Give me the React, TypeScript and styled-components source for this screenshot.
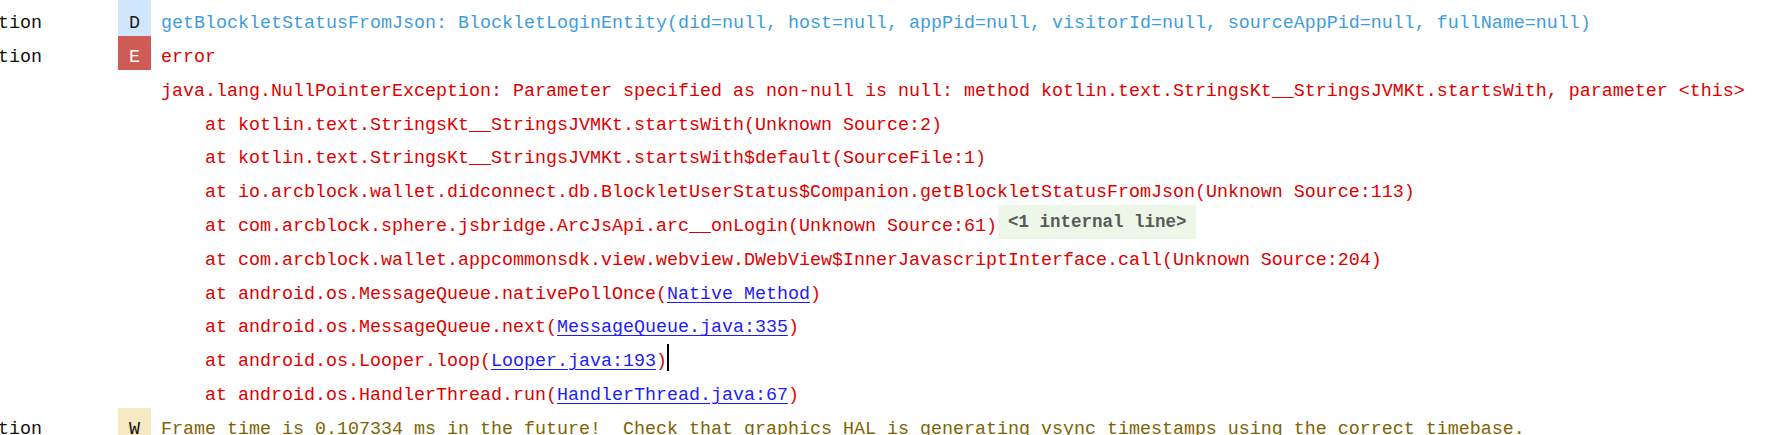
import React from "react";
import styled, { createGlobalStyle, css } from "styled-components";

const ROW = 33.8;

const GlobalStyle = createGlobalStyle`
  html, body {
    margin: 0;
    padding: 0;
    background: #ffffff;
    overflow: hidden;
  }
  body {
    font-family: "Liberation Mono", "Courier New", monospace;
  }
`;

type Level = "D" | "E" | "W";

const levelBadge: Record<Level, { bg: string; fg: string }> = {
  D: { bg: "#cfe6fd", fg: "#1e1e1e" },
  E: { bg: "#cf5b56", fg: "#ffffff" },
  W: { bg: "#f5e8c3", fg: "#111111" },
};

const levelText: Record<Level, string> = {
  D: "#409ddb",
  E: "#e00000",
  W: "#806400",
};

const LogView = styled.div`
  display: flex;
  flex-direction: column;
  font-family: "Liberation Mono", "Courier New", monospace;
  font-size: 18.33px;
  width: 1780px;
`;

const Row = styled.div<{ $extraTop?: number }>`
  display: grid;
  grid-template-columns: 108px 33px 1fr;
  column-gap: 10px;
  height: ${(p) => ROW + (p.$extraTop ?? 0)}px;
  flex: none;
  line-height: 23.8px;
  white-space: pre;
  --pad: ${(p) => 10 + (p.$extraTop ?? 0)}px;
`;

const Tag = styled.div`
  padding-top: var(--pad);
  color: #111111;
  text-indent: -2px;
`;

const Badge = styled.div<{ $level?: Level }>`
  padding-top: var(--pad);
  text-align: center;
  ${(p) =>
    p.$level &&
    css`
      background: ${levelBadge[p.$level].bg};
      color: ${levelBadge[p.$level].fg};
    `}
`;

const Message = styled.div<{ $level: Level; $indent?: boolean }>`
  padding-top: var(--pad);
  padding-left: ${(p) => (p.$indent ? "44px" : "0")};
  color: ${(p) => levelText[p.$level]};
  display: flex;
  align-items: flex-start;
`;

const Link = styled.span`
  color: #1c1cff;
  text-decoration: underline;
  text-underline-offset: 3px;
`;

const Inlay = styled.span`
  display: inline-block;
  margin-left: 1px;
  margin-top: calc(-1 * var(--pad));
  height: ${ROW}px;
  padding: 0 10px;
  background: #ecf7e8;
  color: #5a5a5a;
  font-weight: 700;
  font-size: 17.5px;
  line-height: ${ROW}px;
  padding-top: 1px;
  box-sizing: border-box;
`;

const Caret = styled.span`
  display: inline-block;
  width: 2px;
  height: 26.7px;
  margin-top: 3.8px;
  margin-top: calc(3.8px - var(--pad));
  background: #000000;
  align-self: flex-start;
`;

type Line = {
  tag?: string;
  level?: Level;
  indent?: boolean;
  text: string;
  link?: string;
  after?: string;
  inlay?: string;
  caret?: boolean;
  extraTop?: number;
};

const lines: Line[] = [
  {
    tag: "tion",
    level: "D",
    extraTop: 2.2,
    text:
      "getBlockletStatusFromJson: BlockletLoginEntity(did=null, host=null, appPid=null, visitorId=null, sourceAppPid=null, fullName=null)",
  },
  { tag: "tion", level: "E", text: "error" },
  {
    text:
      "java.lang.NullPointerException: Parameter specified as non-null is null: method kotlin.text.StringsKt__StringsJVMKt.startsWith, parameter <this>",
  },
  { indent: true, text: "at kotlin.text.StringsKt__StringsJVMKt.startsWith(Unknown Source:2)" },
  { indent: true, text: "at kotlin.text.StringsKt__StringsJVMKt.startsWith$default(SourceFile:1)" },
  {
    indent: true,
    text:
      "at io.arcblock.wallet.didconnect.db.BlockletUserStatus$Companion.getBlockletStatusFromJson(Unknown Source:113)",
  },
  {
    indent: true,
    text: "at com.arcblock.sphere.jsbridge.ArcJsApi.arc__onLogin(Unknown Source:61)",
    inlay: "<1 internal line>",
  },
  {
    indent: true,
    text:
      "at com.arcblock.wallet.appcommonsdk.view.webview.DWebView$InnerJavascriptInterface.call(Unknown Source:204)",
  },
  { indent: true, text: "at android.os.MessageQueue.nativePollOnce(", link: "Native Method", after: ")" },
  { indent: true, text: "at android.os.MessageQueue.next(", link: "MessageQueue.java:335", after: ")" },
  { indent: true, text: "at android.os.Looper.loop(", link: "Looper.java:193", after: ")", caret: true },
  { indent: true, text: "at android.os.HandlerThread.run(", link: "HandlerThread.java:67", after: ")" },
  {
    tag: "tion",
    level: "W",
    text:
      "Frame time is 0.107334 ms in the future!  Check that graphics HAL is generating vsync timestamps using the correct timebase.",
  },
];

export default function App() {
  let current: Level = "D";
  return (
    <>
      <GlobalStyle />
      <LogView>
        {lines.map((l, i) => {
          if (l.level) current = l.level;
          return (
            <Row key={i} $extraTop={l.extraTop}>
              <Tag>{l.tag ?? ""}</Tag>
              <Badge $level={l.level}>{l.level ?? ""}</Badge>
              <Message $level={current} $indent={l.indent}>
                <span>{l.text}</span>
                {l.link && <Link>{l.link}</Link>}
                {l.after && <span>{l.after}</span>}
                {l.inlay && <Inlay>{l.inlay}</Inlay>}
                {l.caret && <Caret />}
              </Message>
            </Row>
          );
        })}
      </LogView>
    </>
  );
}
